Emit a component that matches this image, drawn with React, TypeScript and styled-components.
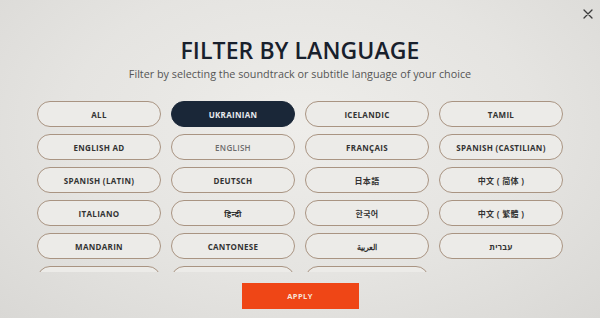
import React from "react";
import styled, { createGlobalStyle } from "styled-components";

const Global = createGlobalStyle`
  html, body { margin: 0; padding: 0; }
  body {
    width: 600px;
    height: 318px;
    overflow: hidden;
    background: #e4e3e0;
    font-family: "Open Sans", "Noto Sans", "Noto Sans CJK SC", sans-serif;
  }
`;

const Page = styled.div`
  position: relative;
  width: 600px;
  height: 318px;
  box-sizing: border-box;
  display: flex;
  flex-direction: column;
  align-items: center;
  background: radial-gradient(ellipse at 50% 40%, #eeedea 0%, #e5e4e1 55%, #d9d8d5 100%);
  padding-top: 36px;
`;

const Close = styled.button`
  position: absolute;
  top: 8px;
  right: 7px;
  width: 11px;
  height: 11px;
  padding: 0;
  border: none;
  background: transparent;
  display: flex;
  align-items: center;
  justify-content: center;
`;

const Title = styled.h1`
  margin: 0;
  font-size: 23px;
  line-height: 28px;
  font-weight: 600;
  color: #18202c;
  letter-spacing: 0.1px;
`;

const Subtitle = styled.p`
  margin: 3px 0 0;
  font-size: 10.8px;
  line-height: 14px;
  color: #555;
`;

const Scroll = styled.div`
  margin-top: 20px;
  width: 526px;
  height: 171px;
  overflow: hidden;
`;

const Grid = styled.div`
  display: grid;
  grid-template-columns: repeat(4, 1fr);
  column-gap: 10px;
  row-gap: 7px;
`;

const Lang = styled.button<{ $selected?: boolean; $muted?: boolean }>`
  height: 26px;
  box-sizing: border-box;
  border-radius: 13px;
  border: 1.6px solid ${(p) => (p.$selected ? "#1a2738" : "#a99482")};
  background: ${(p) => (p.$selected ? "#1a2738" : "#ecebe8")};
  color: ${(p) => (p.$selected ? "#e8eaee" : p.$muted ? "#6c6c6c" : "#333")};
  font-family: "Open Sans", "Noto Sans", "Noto Sans CJK SC", "Noto Sans CJK KR", sans-serif;
  font-size: 8px;
  font-weight: ${(p) => (p.$muted ? 600 : 700)};
  letter-spacing: 0.3px;
  text-transform: uppercase;
  padding: 0;
  display: flex;
  align-items: center;
  justify-content: center;
`;

const Apply = styled.button`
  margin-top: 11px;
  width: 117px;
  height: 26px;
  border: none;
  background: #ef4616;
  color: #f7e4da;
  font-family: "Open Sans", sans-serif;
  font-size: 7.5px;
  font-weight: 700;
  letter-spacing: 0.4px;
`;

const languages: { label: string; selected?: boolean; muted?: boolean }[] = [
  { label: "All" },
  { label: "Ukrainian", selected: true },
  { label: "Icelandic" },
  { label: "Tamil" },
  { label: "English AD" },
  { label: "English", muted: true },
  { label: "Français" },
  { label: "Spanish (Castilian)" },
  { label: "Spanish (Latin)" },
  { label: "Deutsch" },
  { label: "日本語" },
  { label: "中文 ( 简体 )" },
  { label: "Italiano" },
  { label: "हिन्दी" },
  { label: "한국어" },
  { label: "中文 ( 繁體 )" },
  { label: "Mandarin" },
  { label: "Cantonese" },
  { label: "العربية" },
  { label: "עברית" },
  { label: "Português" },
  { label: "Nederlands" },
  { label: "Polski" },
];

export default function App() {
  return (
    <>
      <Global />
      <Page>
        <Close aria-label="Close">
          <svg width="10" height="10" viewBox="0 0 10 10">
            <path d="M1 1 L9 9 M9 1 L1 9" stroke="#3b3b3b" strokeWidth="1.3" strokeLinecap="round" />
          </svg>
        </Close>
        <Title>FILTER BY LANGUAGE</Title>
        <Subtitle>Filter by selecting the soundtrack or subtitle language of your choice</Subtitle>
        <Scroll>
          <Grid>
            {languages.map((l) => (
              <Lang key={l.label} $selected={l.selected} $muted={l.muted}>
                {l.label}
              </Lang>
            ))}
          </Grid>
        </Scroll>
        <Apply>APPLY</Apply>
      </Page>
    </>
  );
}
